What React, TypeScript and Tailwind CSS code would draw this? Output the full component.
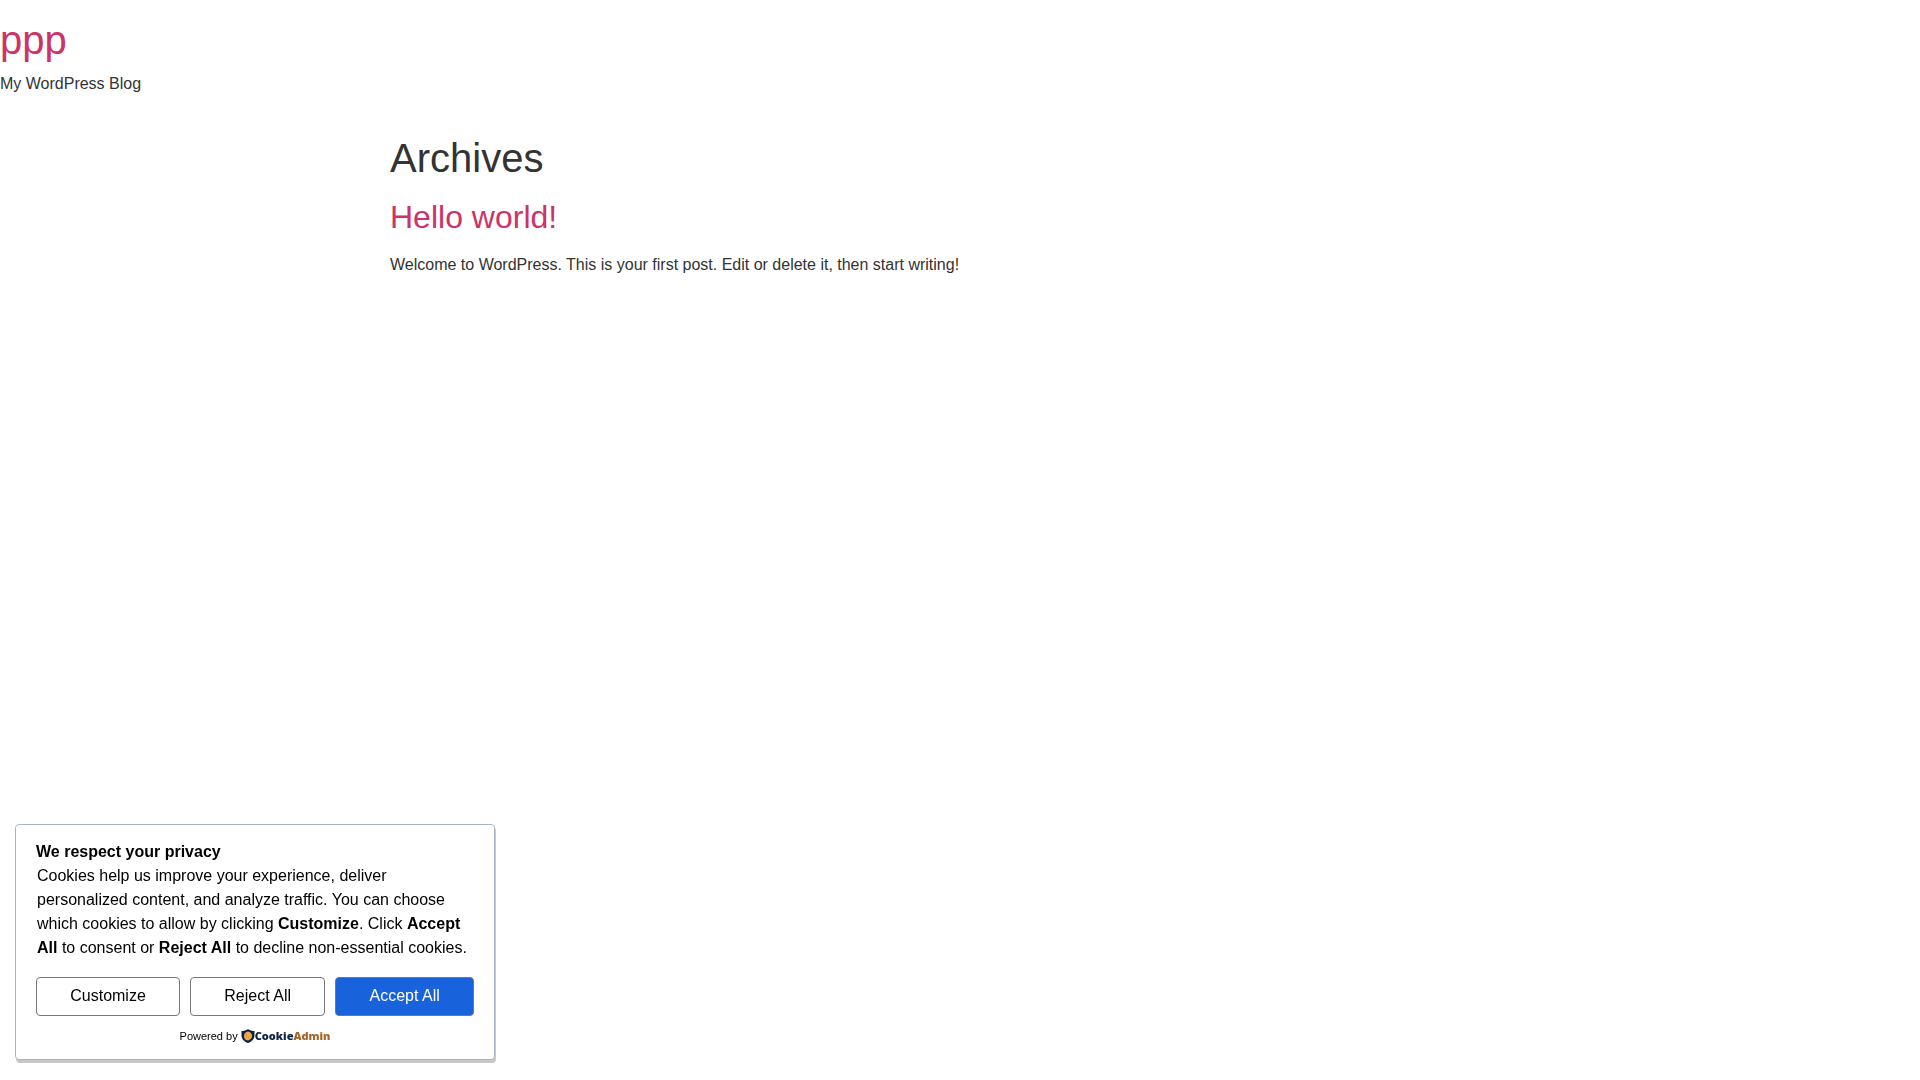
const actionClass =
  'h-[39px] flex-auto cursor-pointer rounded border border-[#777] px-2 pb-px text-base leading-6';

function ShieldLogo() {
  return (
    <svg viewBox="0 0 28 28" className="size-[14px] shrink-0" aria-hidden="true">
      <path d="M14 0C18 3 22 4 27 4V12C27 20 22 25 14 28C6 25 1 20 1 12V4C6 4 10 3 14 0Z" fill="#0b2240" />
      <path
        d="M14 5C16 5 17 7 19 7C20 8 20 10 22 11C22 13 22 15 22 16C21 18 20 20 18 21C16 22 15 23 14 23C11 23 9 21 8 20C6 18 6 16 6 14C6 12 7 10 8 8C10 6 12 5 14 5Z"
        fill="#f0a848"
      />
      <circle cx="11" cy="12" r="1.3" fill="#d08a38" />
      <circle cx="16" cy="16" r="1.4" fill="#d08a38" />
      <circle cx="11" cy="18" r="1" fill="#d08a38" />
    </svg>
  );
}

function CookieNotice() {
  return (
    <section
      aria-labelledby="cookie-title"
      className="fixed bottom-5 left-[15px] w-[480px] max-w-[calc(100%-30px)] rounded border border-[#a8b5c5] bg-white px-5 pt-[15px] pb-[11px] text-base leading-6 text-black shadow-[1px_3px_0_#c8c8c8]"
    >
      <h2 id="cookie-title" className="font-bold">We respect your privacy</h2>
      <p className="px-px">
        Cookies help us improve your experience, deliver personalized content, and analyze traffic. You can
        choose which cookies to allow by clicking <strong>Customize</strong>. Click <strong>Accept All</strong>{' '}
        to consent or <strong>Reject All</strong> to decline non-essential cookies.
      </p>
      <div className="mt-[17px] flex gap-[10px]">
        <button type="button" className={`${actionClass} bg-white`}>Customize</button>
        <button type="button" className={`${actionClass} bg-white`}>Reject All</button>
        <button type="button" className={`${actionClass} bg-[#1863dc] text-white`}>Accept All</button>
      </div>
      <div className="mt-2 flex items-center justify-center gap-[3px] text-[11px]">
        <span>Powered by</span>
        <a href="#" aria-label="CookieAdmin" className="flex items-center font-['Open_Sans',sans-serif] text-[11px] font-extrabold">
          <ShieldLogo />
          <span className="text-[#0b2240]">Cookie</span>
          <span className="text-[#a5672a]">Admin</span>
        </a>
      </div>
    </section>
  );
}

export default function App() {
  return (
    <div className="min-h-screen bg-white font-['Liberation_Sans',Arial,sans-serif] text-base leading-6 text-[#333]">
      <header className="py-4">
        <div className="text-[40px] leading-[48px]">
          <a href="#" className="text-[#cc3366]">ppp</a>
        </div>
        <p className="mt-2">My WordPress Blog</p>
      </header>
      <main className="mx-auto max-w-[1140px] pt-[22px]">
        <h1 className="text-[40px] leading-[48px]">Archives</h1>
        <article className="mt-4">
          <h2 className="text-[32px] leading-[39px]">
            <a href="#" className="text-[#cc3366]">Hello world!</a>
          </h2>
          <p className="mt-4">
            Welcome to WordPress. This is your first post. Edit or delete it, then start writing!
          </p>
        </article>
      </main>
      <CookieNotice />
    </div>
  );
}
